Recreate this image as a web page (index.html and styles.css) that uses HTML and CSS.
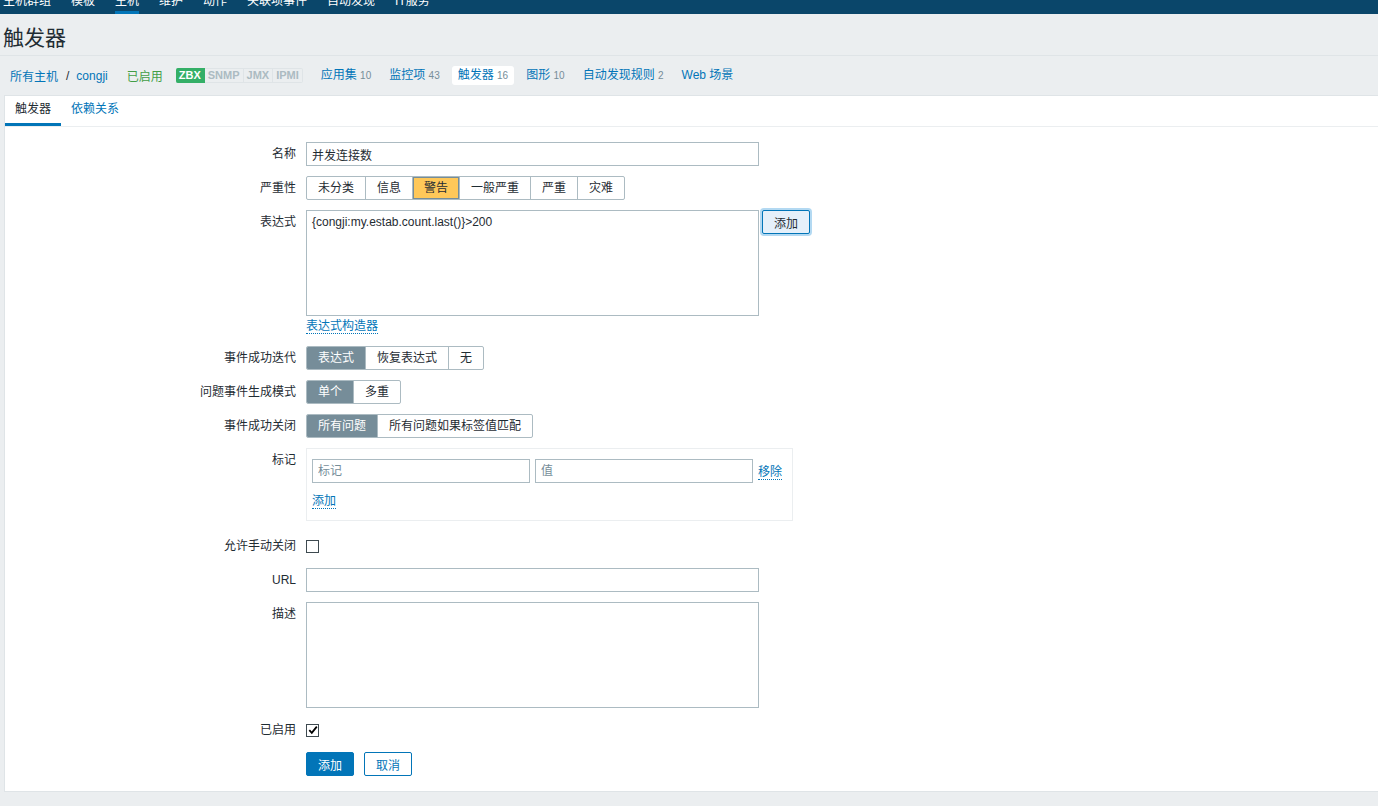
FILE: index.html
```html
<!DOCTYPE html>
<html lang="zh-CN">
<head>
    <meta charset="UTF-8">
    <title>触发器</title>
    <link rel="stylesheet" href="styles.css">
</head>
<body>
    <!-- top menu (page scrolled a little) -->
    <div class="topnav">
        <ul>
            <li>主机群组</li>
            <li>模板</li>
            <li class="active">主机</li>
            <li>维护</li>
            <li>动作</li>
            <li>关联项事件</li>
            <li>自动发现</li>
            <li>IT服务</li>
        </ul>
    </div>

    <div class="header">
        <h1>触发器</h1>
    </div>

    <div class="crumbs">
        <a class="link">所有主机</a>
        <span class="sep">/</span>
        <a class="link">congji</a>
        <span class="enabled">已启用</span>
        <span class="status">
            <span class="st st-on">ZBX</span><span class="st">SNMP</span><span class="st">JMX</span><span class="st">IPMI</span>
        </span>
        <a class="item">应用集 <sup>10</sup></a>
        <a class="item">监控项 <sup>43</sup></a>
        <a class="item selected">触发器 <sup>16</sup></a>
        <a class="item">图形 <sup>10</sup></a>
        <a class="item">自动发现规则 <sup>2</sup></a>
        <a class="item">Web 场景</a>
    </div>

    <div class="container">
        <div class="tabs">
            <span class="tab active">触发器</span>
            <span class="tab">依赖关系</span>
        </div>

        <form class="form">
            <div class="row">
                <label>名称</label>
                <div class="field"><input class="text" type="text" value="并发连接数"></div>
            </div>

            <div class="row">
                <label>严重性</label>
                <div class="field">
                    <div class="segmented">
                        <span>未分类</span><span>信息</span><span class="warn">警告</span><span>一般严重</span><span>严重</span><span>灾难</span>
                    </div>
                </div>
            </div>

            <div class="row">
                <label>表达式</label>
                <div class="field">
                    <div class="expr">
                        <textarea class="area">{congji:my.estab.count.last()}>200</textarea>
                        <button type="button" class="btn-alt">添加</button>
                    </div>
                    <div class="under"><a class="dotted">表达式构造器</a></div>
                </div>
            </div>

            <div class="row">
                <label>事件成功迭代</label>
                <div class="field">
                    <div class="segmented">
                        <span class="on">表达式</span><span>恢复表达式</span><span>无</span>
                    </div>
                </div>
            </div>

            <div class="row">
                <label>问题事件生成模式</label>
                <div class="field">
                    <div class="segmented">
                        <span class="on">单个</span><span>多重</span>
                    </div>
                </div>
            </div>

            <div class="row">
                <label>事件成功关闭</label>
                <div class="field">
                    <div class="segmented">
                        <span class="on">所有问题</span><span>所有问题如果标签值匹配</span>
                    </div>
                </div>
            </div>

            <div class="row row-tags">
                <label>标记</label>
                <div class="field">
                    <div class="tagbox">
                        <div class="tagline">
                            <input class="text tag" type="text" placeholder="标记">
                            <input class="text tag" type="text" placeholder="值">
                            <a class="dotted">移除</a>
                        </div>
                        <div class="tagadd"><a class="dotted">添加</a></div>
                    </div>
                </div>
            </div>

            <div class="row">
                <label>允许手动关闭</label>
                <div class="field check-field"><span class="check"></span></div>
            </div>

            <div class="row">
                <label>URL</label>
                <div class="field"><input class="text" type="text"></div>
            </div>

            <div class="row">
                <label>描述</label>
                <div class="field"><textarea class="area"></textarea></div>
            </div>

            <div class="row">
                <label>已启用</label>
                <div class="field check-field">
                    <span class="check">
                        <svg viewBox="0 0 12 12" width="12" height="12"><path d="M2.3 6.2 L4.8 8.8 L9.8 2.6" fill="none" stroke="#000" stroke-width="1.8"/></svg>
                    </span>
                </div>
            </div>

            <div class="row row-last">
                <label></label>
                <div class="field buttons">
                    <button type="button" class="btn">添加</button>
                    <button type="button" class="btn-outline">取消</button>
                </div>
            </div>
        </form>
    </div>
</body>
</html>
```

FILE: styles.css
```css
* {
    margin: 0;
    padding: 0;
    box-sizing: border-box;
}

body {
    background: #ebeef0;
    color: #1f2c33;
    font-family: "Liberation Sans", Arial, "Noto Sans CJK SC", sans-serif;
    font-size: 12px;
    overflow: hidden;
}

a {
    color: #0275b8;
    text-decoration: none;
}

/* top menu (page is scrolled, only its lower edge shows) */
.topnav {
    height: 14px;
    background: #0a466a;
    overflow: hidden;
}

.topnav ul {
    list-style: none;
    display: flex;
    gap: 20px;
    padding-left: 3px;
    margin-top: -8px;
}

.topnav li {
    color: #fff;
    line-height: 19px;
    border-bottom: 3px solid transparent;
}

.topnav li.active {
    border-bottom-color: #0275b8;
}

/* page title */
.header {
    padding: 12px 3px 5px;
    border-bottom: 1px solid #dfe4e7;
}

.header h1 {
    font-size: 21px;
    font-weight: normal;
    line-height: 24px;
}

/* host navigation */
.crumbs {
    display: flex;
    align-items: center;
    height: 39px;
    padding-left: 10px;
}

.crumbs .sep {
    margin: 0 7px 0 8px;
}

.crumbs .enabled {
    color: #429e47;
    margin-left: 19px;
}

.status {
    display: flex;
    margin-left: 13px;
    margin-right: 12px;
}

.st {
    font-size: 11px;
    font-weight: bold;
    line-height: 13px;
    padding: 0 3px;
    color: #acbbc2;
    background: #ebeef0;
    border: 1px solid #dfe4e7;
    border-left: none;
}

.st-on {
    color: #fff;
    background: #34af67;
    border-color: #34af67;
    border-radius: 2px 0 0 2px;
}

.st:last-child {
    border-radius: 0 2px 2px 0;
}

.crumbs .item {
    padding: 2px 6px;
    line-height: 15px;
    border-radius: 3px;
}

.crumbs .item + .item {
    margin-left: 6px;
}

.crumbs .item.selected {
    background: #fff;
}

.crumbs sup {
    color: #768d99;
    font-size: 10px;
    vertical-align: baseline;
}

/* white box */
.container {
    background: #fff;
    border: 1px solid #dfe4e7;
    border-right: none;
    margin-left: 4px;
    height: 697px;
}

.tabs {
    display: flex;
    height: 31px;
    border-bottom: 1px solid #ebeef0;
}

.tab {
    padding: 0 10px;
    line-height: 27px;
    color: #0275b8;
    border-bottom: 3px solid transparent;
}

.tab.active {
    color: #1f2c33;
    border-bottom-color: #0275b8;
}

/* form */
.form {
    padding-top: 15px;
}

.row {
    display: grid;
    grid-template-columns: 291px 1fr;
    column-gap: 10px;
    align-items: start;
    margin-bottom: 10px;
}

.row label {
    text-align: right;
    line-height: 24px;
}

.row-tags {
    margin-bottom: 13px;
}

.text, .area {
    width: 453px;
    border: 1px solid #acbbc2;
    font-family: inherit;
    font-size: 12px;
    color: #1f2c33;
    padding: 0 5px;
    background: #fff;
}

.text {
    height: 24px;
}

.area {
    display: block;
    height: 106px;
    padding: 4px 5px;
    resize: none;
}

.text::placeholder {
    color: #768d99;
}

.segmented {
    display: inline-flex;
    border: 1px solid #acbbc2;
    border-radius: 2px;
    overflow: hidden;
}

.segmented span {
    line-height: 22px;
    padding: 0 11px;
    border-left: 1px solid #acbbc2;
}

.segmented span:first-child {
    border-left: none;
}

.segmented .warn {
    background: #ffc859;
    box-shadow: inset 0 0 0 1px #768d99;
}

.segmented .on {
    background: #768d99;
    color: #fff;
}

.expr {
    display: flex;
    gap: 3px;
    align-items: flex-start;
}

.btn-alt {
    width: 48px;
    height: 24px;
    background: #e5f0fa;
    border: 1px solid #0275b8;
    border-radius: 2px;
    box-shadow: 0 0 0 2px #b3d9f2;
    color: #1f2c33;
    font-family: inherit;
    font-size: 12px;
}

.under {
    line-height: 19px;
    padding-top: 1px;
}

.dotted {
    border-bottom: 1px dotted #0275b8;
}

.tagbox {
    width: 487px;
    border: 1px solid #ebeef0;
    padding: 10px 9px 10px 5px;
}

.tagline {
    display: flex;
    align-items: center;
    gap: 5px;
}

.text.tag {
    width: 218px;
}

.tagadd {
    margin-top: 9px;
    line-height: 18px;
}

.check-field {
    height: 24px;
    display: flex;
    align-items: center;
}

.check {
    display: block;
    width: 13px;
    height: 13px;
    border: 1px solid #3e4a50;
    line-height: 0;
}

.check svg {
    margin: -0.5px 0 0 -0.5px;
}

.buttons {
    display: flex;
    gap: 10px;
}

.btn, .btn-outline {
    width: 48px;
    height: 24px;
    border: 1px solid #0275b8;
    border-radius: 2px;
    font-family: inherit;
    font-size: 12px;
}

.btn {
    background: #0275b8;
    color: #fff;
}

.btn-outline {
    background: #fff;
    color: #0275b8;
}

.row-last {
    margin-bottom: 0;
}
```
